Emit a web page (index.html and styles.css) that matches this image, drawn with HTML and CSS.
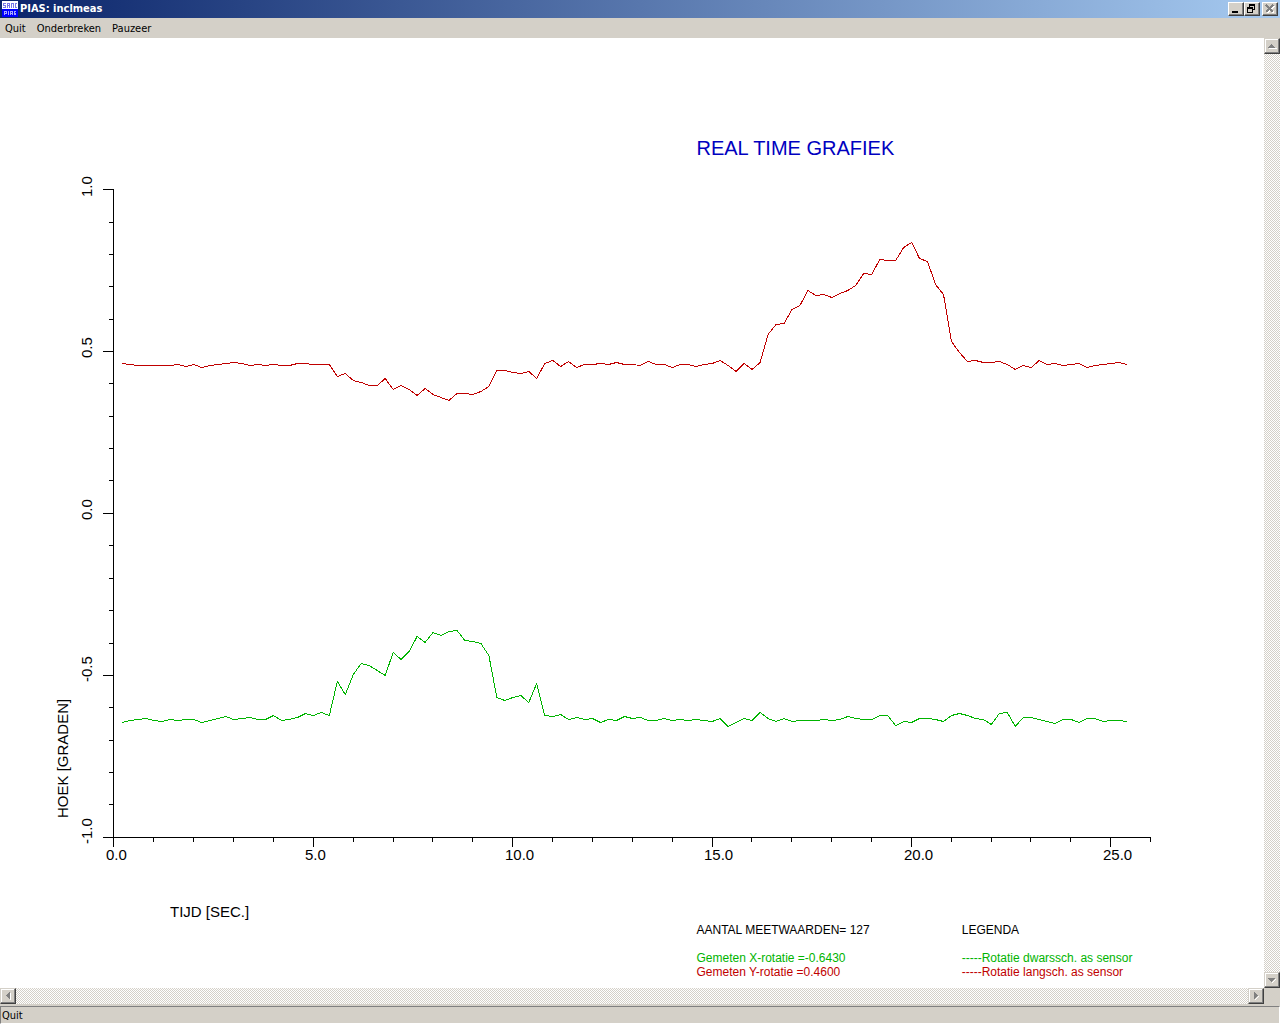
FILE: index.html
```html
<!DOCTYPE html>
<html lang="nl">
<head>
<meta charset="utf-8">
<title>PIAS: inclmeas</title>
<link rel="stylesheet" href="styles.css">
</head>
<body>
<header class="titlebar">
  <svg class="app-icon" width="16" height="16" viewBox="0 0 16 16" shape-rendering="crispEdges" aria-hidden="true">
    <path fill="#fff" d="M0 0h16v8H0z"/>
    <path fill="#00f" d="M0 8h16v8H0z"/>
    <path fill="none" stroke="#7878e8" d="M4 2.500H1.500V4.500H3.500V6.500H1M5.500 7V2.500H7.500V7M5 4.500h3M9.500 7V2.500H11.500V7M15 2.500H13.500V6.500H15"/>
    <path fill="none" stroke="#a8a8ff" d="M2.500 14V10.500H4.500V12.500H2M6.500 10V14M8.500 14V10.500H10.500V14M8 12.500h3M14 10.500H12.500V12.500H13.500V13.500H12"/>
  </svg>
  <span class="window-name">PIAS: inclmeas</span>
  <button class="bevel caption" aria-label="Minimize"><svg width="14" height="12" viewBox="0 0 14 12" shape-rendering="crispEdges"><path d="M3 8h6v2H3z"/></svg></button>
  <button class="bevel caption" aria-label="Restore"><svg width="14" height="12" viewBox="0 0 14 12" shape-rendering="crispEdges"><path fill-rule="evenodd" d="M4 1h6v6H8V6h1V3H5v1H4zM2 4h6v6H2zM3 6v3h4V6z"/></svg></button>
  <button class="bevel caption close" aria-label="Close" disabled><svg width="14" height="12" viewBox="0 0 14 12" shape-rendering="crispEdges"><path d="M4 3l7 7M11 3l-7 7" stroke="#fff" stroke-width="2"/><path d="M3 2l7 7M10 2l-7 7" stroke="#808080" stroke-width="2"/></svg></button>
</header>
<nav class="menubar">
  <button>Quit</button>
  <button>Onderbreken</button>
  <button>Pauzeer</button>
</nav>
<div class="workspace">
  <main class="canvas">
    <h1>REAL TIME GRAFIEK</h1>
    <svg class="chart" viewBox="0 160 1264 760" role="img" aria-label="Hoek in graden tegen tijd in seconden">
      <g class="axes">
        <path d="M113.500 189V847M103 837.500H1151"/>
        <path d="M103 189.500h10M103 351.500h10M103 513.500h10M103 675.500h10"/>
        <path d="M109 222.500h4M109 254.500h4M109 286.500h4M109 319.500h4M109 383.500h4M109 416.500h4M109 448.500h4M109 480.500h4M109 545.500h4M109 578.500h4M109 610.500h4M109 643.500h4M109 707.500h4M109 740.500h4M109 772.500h4M109 804.500h4"/>
        <path d="M313.500 838v9M512.500 838v9M712.500 838v9M911.500 838v9M1110.500 838v9"/>
        <path d="M153.500 838v4M193.500 838v4M233.500 838v4M273.500 838v4M353.500 838v4M393.500 838v4M432.500 838v4M472.500 838v4M552.500 838v4M592.500 838v4M632.500 838v4M672.500 838v4M751.500 838v4M791.500 838v4M831.500 838v4M871.500 838v4M951.500 838v4M991.500 838v4M1030.500 838v4M1070.500 838v4M1150.500 838v4"/>
      </g>
      <!-- One sample per 0.2 s: the group scales the sample number to the time axis -->
      <g class="series" transform="translate(114 .5) scale(7.976 1)">
        <polyline class="y-rotation" points="1,363 2,364 3,365 4,365 5,365 6,365 7,365 8,364 9,366 10,364 11,367 12,365 13,364 14,363 15,362 16,363 17,365 18,364 19,365 20,364 21,365 22,365 23,363 24,363 25,364 26,364 27,364 28,376 29,373 30,380 31,382 32,385 33,385 34,378 35,389 36,385 37,389 38,395 39,388 40,394 41,397 42,400 43,393 44,393 45,394 46,391 47,386 48,370 49,370 50,372 51,373 52,371 53,378 54,363 55,360 56,366 57,361 58,367 59,364 60,364 61,363 62,364 63,362 64,364 65,364 66,365 67,361 68,364 69,364 70,367 71,364 72,364 73,366 74,364 75,363 76,360 77,365 78,371 79,363 80,369 81,362 82,334 83,324 84,323 85,309 86,305 87,290 88,295 89,294 90,297 91,293 92,290 93,285 94,273 95,274 96,259 97,260 98,260 99,247 100,242 101,258 102,261 103,284 104,294 105,341 106,352 107,361 108,360 109,362 110,362 111,361 112,364 113,369 114,365 115,367 116,360 117,364 118,363 119,365 120,364 121,363 122,367 123,365 124,364 125,363 126,362 127,364"/>
        <polyline class="x-rotation" points="1,722 2,720 3,719 4,718 5,720 6,721 7,719 8,720 9,719 10,719 11,722 12,720 13,718 14,716 15,719 16,718 17,717 18,719 19,719 20,715 21,720 22,719 23,717 24,713 25,715 26,712 27,715 28,681 29,694 30,674 31,663 32,665 33,670 34,675 35,652 36,659 37,651 38,636 39,642 40,632 41,635 42,631 43,630 44,640 45,641 46,643 47,655 48,697 49,700 50,697 51,695 52,702 53,683 54,715 55,716 56,714 57,719 58,717 59,719 60,718 61,722 62,719 63,720 64,716 65,718 66,717 67,720 68,720 69,718 70,720 71,719 72,720 73,719 74,720 75,721 76,718 77,726 78,722 79,718 80,720 81,712 82,718 83,721 84,718 85,721 86,720 87,720 88,720 89,719 90,720 91,719 92,716 93,718 94,719 95,719 96,715 97,715 98,725 99,721 100,722 101,718 102,718 103,719 104,721 105,715 106,713 107,715 108,718 109,719 110,724 111,713 112,712 113,726 114,717 115,717 116,719 117,721 118,723 119,719 120,719 121,722 122,718 123,718 124,721 125,720 126,720 127,721"/>
      </g>
      <g class="labels">
        <text x="106" y="860">0.0</text>
        <text x="305" y="860">5.0</text>
        <text x="505" y="860">10.0</text>
        <text x="704" y="860">15.0</text>
        <text x="904" y="860">20.0</text>
        <text x="1103" y="860">25.0</text>
        <text x="170" y="917">TIJD [SEC.]</text>
        <text transform="translate(92 197) rotate(-90)">1.0</text>
        <text transform="translate(92 358) rotate(-90)">0.5</text>
        <text transform="translate(92 520) rotate(-90)">0.0</text>
        <text transform="translate(92 682) rotate(-90)">-0.5</text>
        <text transform="translate(92 844) rotate(-90)">-1.0</text>
        <text transform="translate(68 818) rotate(-90)">HOEK [GRADEN]</text>
      </g>
    </svg>
    <section class="notes">
      <div>
        <h2>AANTAL MEETWAARDEN= 127</h2>
        <p class="green">Gemeten X-rotatie =-0.6430</p>
        <p class="red">Gemeten Y-rotatie =0.4600</p>
      </div>
      <div>
        <h2>LEGENDA</h2>
        <p class="green">-----Rotatie dwarssch. as sensor</p>
        <p class="red">-----Rotatie langsch. as sensor</p>
      </div>
    </section>
  </main>
  <div class="track vertical">
    <button class="bevel arrow" aria-label="Omhoog"><svg width="12" height="12" viewBox="0 0 12 12" shape-rendering="crispEdges"><path fill="#fff" d="M3 8h8v1H3z"/><path fill="#808080" d="M5 4h1v1h1v1h1v1h1v1H2V7h1V6h1V5h1z"/></svg></button>
    <button class="bevel arrow" aria-label="Omlaag"><svg width="12" height="12" viewBox="0 0 12 12" shape-rendering="crispEdges"><path fill="#fff" d="M9 5h1v1H9v1H8v1H7v1H6V8h1V7h1V6h1z"/><path fill="#808080" d="M2 4h7v1H8v1H7v1H6v1H5V7H4V6H3V5H2z"/></svg></button>
  </div>
  <div class="track horizontal">
    <button class="bevel arrow" aria-label="Links"><svg width="12" height="12" viewBox="0 0 12 12" shape-rendering="crispEdges"><path fill="#fff" d="M8 3h1v7H8z"/><path fill="#808080" d="M7 2h1v7H7V8H6V7H5V6H4V5h1V4h1V3h1z"/></svg></button>
    <button class="bevel arrow" aria-label="Rechts"><svg width="12" height="12" viewBox="0 0 12 12" shape-rendering="crispEdges"><path fill="#fff" d="M5 9h1V8h1V7h1V6h1v1H8v1H7v1H6v1H5z"/><path fill="#808080" d="M4 2h1v1h1v1h1v1h1v1H7v1H6v1H5v1H4z"/></svg></button>
  </div>
</div>
<footer class="statusbar"><span>Quit</span></footer>
</body>
</html>
```
FILE: styles.css
```css
* { box-sizing: border-box; }

body {
  display: flex;
  flex-direction: column;
  min-height: 100vh;
  margin: 0;
  background: #d4d0c8;
  color: #000;
  font: 11px/14px "DejaVu Sans Condensed", "DejaVu Sans", sans-serif;
}

button {
  margin: 0;
  padding: 0;
  border: 0;
  background: none;
  color: inherit;
  font: inherit;
}

.titlebar {
  display: flex;
  align-items: center;
  height: 18px;
  padding: 0 2px;
  background: linear-gradient(to right, #0a246a, #a6caf0);
  color: #fff;
  font-weight: bold;
}

.window-name {
  flex: 1;
  padding-left: 2px;
}

.bevel {
  display: grid;
  place-items: center;
  overflow: hidden;
  border: 1px solid;
  border-color: #fff #404040 #404040 #fff;
  background: #d4d0c8;
  box-shadow: inset -1px -1px #808080;
}

.caption {
  width: 16px;
  height: 14px;
}

.close { margin-left: 2px; }

.menubar {
  display: flex;
  gap: 11px;
  height: 20px;
  padding: 2px 5px 0;
}

.workspace {
  display: grid;
  flex: 1;
  grid-template-columns: 1fr 16px;
  grid-template-rows: 1fr 16px;
}

.canvas {
  padding-top: 98px;
  background: #fff;
  font-family: "Liberation Sans", Arial, sans-serif;
}

h1 {
  margin: 0;
  padding-left: 55.1%;
  color: #0000c0;
  font-size: 20px;
  font-weight: normal;
  line-height: 24px;
}

.chart {
  display: block;
  width: 100%;
}

.axes {
  fill: none;
  stroke: #000;
  shape-rendering: crispEdges;
}

.series polyline {
  fill: none;
  vector-effect: non-scaling-stroke;
  shape-rendering: crispEdges;
}

.y-rotation { stroke: #c00000; }
.x-rotation { stroke: #00b400; }

.labels { font-size: 15px; }

.notes {
  display: grid;
  grid-template-columns: 265fr 302fr;
  padding: 3px 0 9px 55.1%;
  font-size: 12px;
}

.notes h2 {
  margin: 0 0 14px;
  font-size: 12px;
  font-weight: normal;
}

.notes p { margin: 0; }

.green { color: #00b400; }
.red { color: #c00000; }

.track {
  display: flex;
  justify-content: space-between;
  background: repeating-conic-gradient(#fff 0 25%, #d4d0c8 0 50%) 0 0 / 2px 2px;
}

.vertical { flex-direction: column; }

.arrow {
  width: 16px;
  height: 16px;
  border-color: #d4d0c8 #404040 #404040 #d4d0c8;
  box-shadow: inset -1px -1px #808080, inset 1px 1px #fff;
}

.statusbar {
  height: 20px;
  padding-top: 2px;
}

.statusbar span {
  display: block;
  height: 18px;
  padding: 2px 0 0 1px;
  border: 1px solid;
  border-color: #808080 #fff #fff #808080;
}
```
